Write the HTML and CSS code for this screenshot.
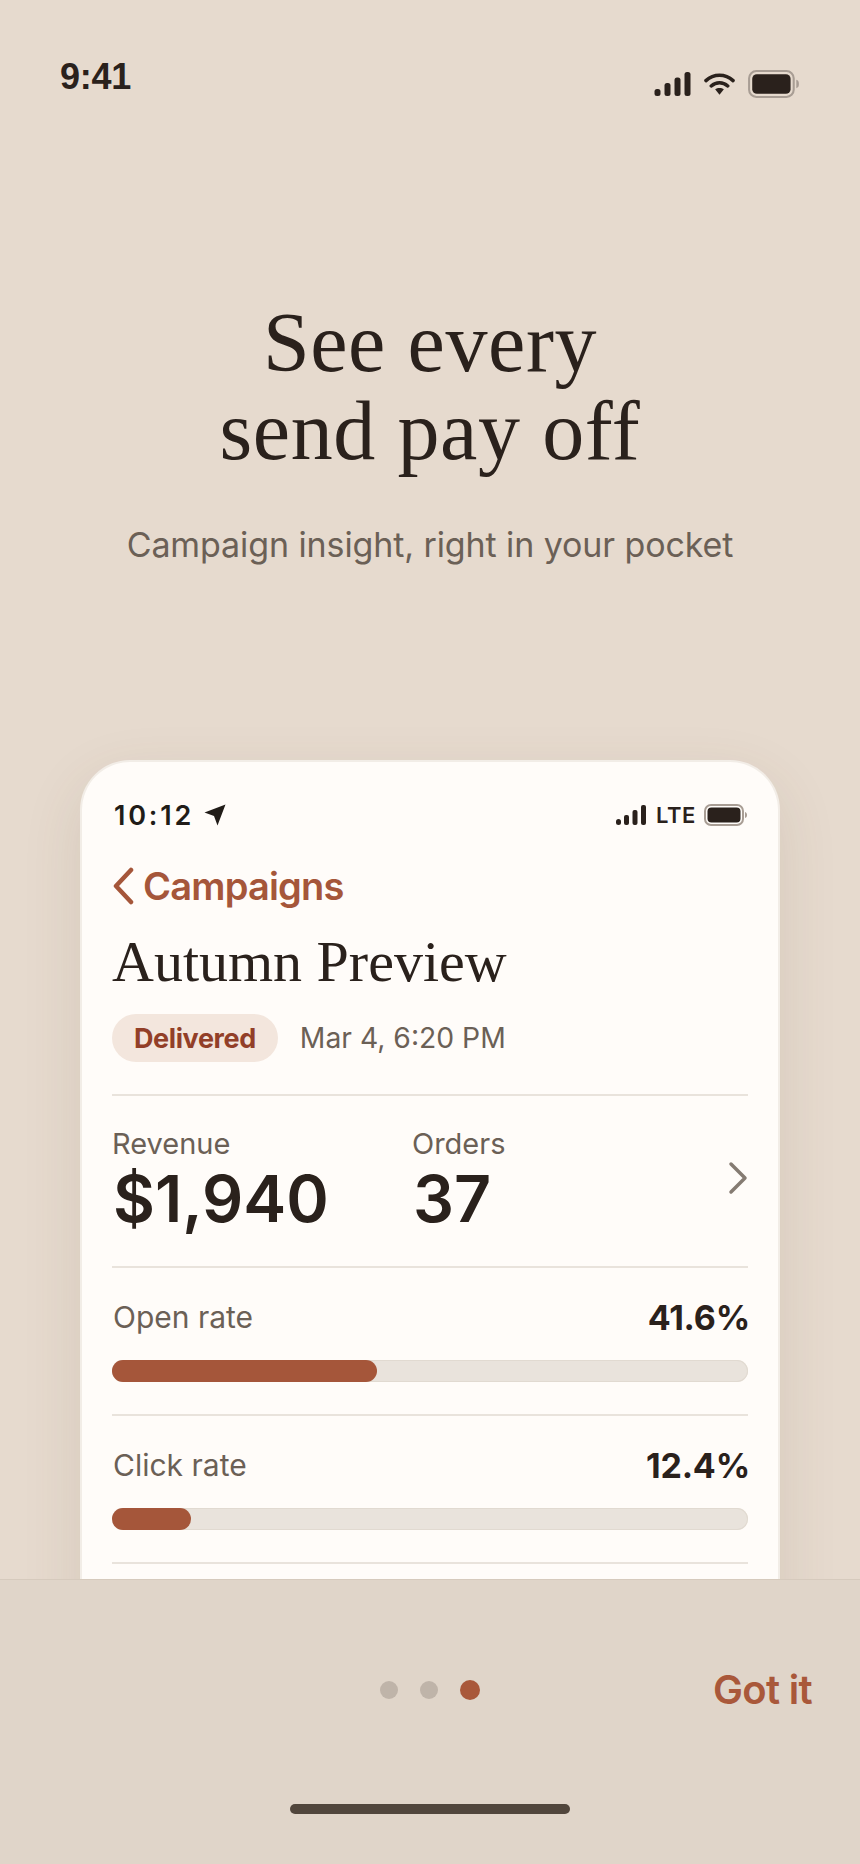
FILE: index.html
```html
<!DOCTYPE html>
<html lang="en">
<head>
<meta charset="utf-8">
<title>Campaign insight</title>
<link rel="stylesheet" href="styles.css">
</head>
<body>
<div class="screen">
  <main class="main">
    <div class="status">
      <span class="status-time">9:41</span>
      <div class="status-icons">
        <svg class="i-signal" viewBox="0 0 36 24"><rect x="0" y="17" width="6" height="7" rx="2.5"/><rect x="10" y="11" width="6" height="13" rx="2.5"/><rect x="20" y="5.500" width="6" height="18.500" rx="2.500"/><rect x="30" y="0" width="6" height="24" rx="2.500"/></svg>
        <svg class="i-wifi" viewBox="0 0 32 24"><path d="M2 8.500C10 1 22 1 30 8.500M7.500 14C12.500 9.500 19.500 9.500 24.500 14" fill="none" stroke-width="3.600" stroke-linecap="round"/><path d="M11.500 17.500c2.500-2 6.500-2 9 0L16 23z" stroke="none"/></svg>
        <svg class="i-batt" viewBox="0 0 50 27"><rect x="1" y="1" width="43" height="25" rx="7" class="b-rim"/><rect x="4" y="4" width="37" height="19" rx="4.500" class="b-fill"/><path d="M46.500 9.500c2 .5 2.500 2 2.500 4s-.5 3.500-2.500 4z" class="b-tip"/></svg>
      </div>
    </div>
    <section class="hero">
      <h1 class="title">See every<br>send pay off</h1>
      <p class="sub">Campaign insight, right in your pocket</p>
    </section>
    <article class="card">
      <div class="c-status">
        <div class="c-time"><span>10:12</span>
          <svg class="i-loc" viewBox="0 0 22 22"><path d="M21.500 .500 L13.500 21.500 L10 12 L.500 8.500Z"/></svg>
        </div>
        <div class="c-icons">
          <svg class="i-signal-s" viewBox="0 0 30 20"><rect x="0" y="14" width="5" height="6" rx="2.500"/><rect x="8" y="10" width="5" height="10" rx="2"/><rect x="16.500" y="5" width="5" height="15" rx="2"/><rect x="25" y="0" width="5" height="20" rx="2"/></svg>
          <span class="lte">LTE</span>
          <svg class="i-batt-s" viewBox="0 0 44 22"><rect x="1" y="1" width="38" height="20" rx="6" class="b-rim"/><rect x="3.500" y="3.500" width="33" height="15" rx="4" class="b-fill"/><path d="M41 8c1.500.5 2 1.500 2 3s-.5 2.500-2 3z" class="b-tip"/></svg>
        </div>
      </div>
      <div class="back">
        <svg class="i-back" viewBox="0 0 22 38"><path d="M19 3 L4 19 L19 35" fill="none" stroke-width="4.500" stroke-linecap="round" stroke-linejoin="round"/></svg>
        <span>Campaigns</span>
      </div>
      <h2 class="c-title">Autumn Preview</h2>
      <div class="meta">
        <span class="pill">Delivered</span>
        <span class="date">Mar 4, 6:20 PM</span>
      </div>
      <div class="stats">
        <div class="stat stat-rev">
          <div class="stat-label">Revenue</div>
          <div class="stat-value">$1,940</div>
        </div>
        <div class="stat">
          <div class="stat-label">Orders</div>
          <div class="stat-value">37</div>
        </div>
        <svg class="i-next" viewBox="0 0 20 34"><path d="M3 3 L17 17 L3 31" fill="none" stroke-width="3.500" stroke-linecap="round" stroke-linejoin="round"/></svg>
      </div>
      <div class="metric">
        <div class="metric-row"><span class="metric-name">Open rate</span><span class="metric-val">41.6%</span></div>
        <div class="track"><div class="fill" style="width:41.600%"></div></div>
      </div>
      <div class="metric">
        <div class="metric-row"><span class="metric-name">Click rate</span><span class="metric-val">12.4%</span></div>
        <div class="track"><div class="fill" style="width:12.400%"></div></div>
      </div>
    </article>
  </main>
  <footer class="footer">
    <div class="foot-row">
      <span></span>
      <div class="dots"><span class="dot"></span><span class="dot"></span><span class="dot on"></span></div>
      <span class="got">Got it</span>
    </div>
    <div class="home"></div>
  </footer>
</div>
</body>
</html>
```
FILE: styles.css
```css
* { box-sizing: border-box; }
html, body { margin: 0; padding: 0; }
body { background: #e6dace; font-family: Inter, "Liberation Sans", sans-serif; color: #2a211c; }
.screen { width: 860px; height: 1864px; display: flex; flex-direction: column; overflow: hidden; background: #e6dace; }
.main { flex: 1 1 0; min-height: 0; overflow: hidden; padding: 0 80px; }
.status { margin: 0 -80px; padding: 57px 60px 0 60px; height: 118px; display: flex; justify-content: space-between; align-items: flex-start; }
.status-time { font-family: "Liberation Sans", sans-serif; font-weight: 700; font-size: 36px; line-height: 39px; letter-spacing: -.3px; color: #2a211c; }
.status-icons { display: flex; align-items: center; gap: 13px; margin: 13px 0 0 0; }
.status-icons svg { fill: #2a211c; stroke: #2a211c; }
.i-signal { width: 37px; height: 24px; stroke: none !important; }
.i-wifi { width: 31px; height: 24px; }
.i-batt { width: 52px; height: 28px; stroke: none !important; }
.b-rim { fill: none; stroke: #a89d94; stroke-width: 2; }
.b-fill { fill: #2a211c; }
.b-tip { fill: #a89d94; stroke: none; }
.hero { text-align: center; margin: 0 -80px; padding-top: 181px; }
.title { margin: 0; font-family: "Liberation Serif", serif; font-weight: 400; font-size: 84px; line-height: 88px; letter-spacing: .6px; color: #2a211c; }
.sub { margin: 47px 0 0; font-size: 34px; line-height: 46px; letter-spacing: -.1px; color: #6b6056; }
.card { margin-top: 192px; height: 900px; background: #fffcf9; border: 2px solid #f2ede7; border-bottom: 0; border-radius: 50px 50px 0 0; padding: 36px 30px 0; box-shadow: 0 20px 60px rgba(90, 70, 50, .12); }
.c-status { display: flex; justify-content: space-between; align-items: center; height: 34px; }
.c-time { display: flex; align-items: center; gap: 10px; margin-left: 2px; font-weight: 600; font-size: 27px; letter-spacing: 2.800px; color: #211c18; }
.i-loc { width: 22px; height: 22px; fill: #211c18; }
.c-icons { display: flex; align-items: center; gap: 9px; }
.i-signal-s { width: 30px; height: 20px; margin-right: 1px; fill: #2a211c; }
.lte { font-weight: 600; font-size: 22px; letter-spacing: .6px; color: #2a211c; }
.i-batt-s { width: 44px; height: 22px; margin-left: -1px; }
.back { display: flex; align-items: center; gap: 9px; margin-top: 30px; height: 48px; color: #a5563a; font-weight: 600; font-size: 38px; letter-spacing: -.8px; }
.i-back { width: 22px; height: 38px; stroke: #a5563a; }
.c-title { margin: 19px 0 0; font-family: "Liberation Serif", serif; font-weight: 400; font-size: 58px; line-height: 66px; color: #2a211c; }
.meta { display: flex; align-items: center; gap: 22px; margin-top: 19px; }
.pill { background: #f3e6dd; border-radius: 24px; padding: 0 22px; height: 48px; display: flex; align-items: center; font-weight: 700; font-size: 27px; letter-spacing: -.4px; color: #923f28; }
.date { font-size: 28.300px; color: #6b6056; }
.stats { display: flex; align-items: flex-start; margin-top: 32px; border-top: 2px solid #e9e3dc; border-bottom: 2px solid #e9e3dc; height: 174px; padding-top: 31px; }
.stat-rev { width: 300px; }
.stat-label { font-size: 29px; line-height: 34px; margin-bottom: 3px; color: #6b6056; }
.stat-value { margin-left: 1px; font-weight: 600; font-size: 64.500px; line-height: 70px; color: #2a211c; }
.i-next { width: 20px; height: 34px; stroke: #857b72; margin: 34px 0 0 auto; }
.metric { border-bottom: 2px solid #e9e3dc; height: 148px; padding-top: 31px; }
.metric-row { display: flex; justify-content: space-between; align-items: center; height: 36px; }
.metric-name { margin-left: 1px; font-size: 30px; color: #6b6056; }
.metric-val { margin-right: -2px; font-weight: 700; font-size: 34px; letter-spacing: -.2px; color: #2a211c; }
.track { margin-top: 25px; height: 22px; border-radius: 11px; background: #e9e3dc; box-shadow: inset 0 0 0 1px #e1dad1; }
.fill { height: 100%; border-radius: 11px; background: #a5563a; }
.footer { height: 285px; background: #e0d5c9; border-top: 1px solid #d6cabd; position: relative; z-index: 1; }
.foot-row { height: 220px; padding-right: 48px; display: grid; grid-template-columns: 1fr auto 1fr; align-items: center; }
.dots { display: flex; gap: 22px; align-items: center; margin-left: 48px; }
.dot { width: 18px; height: 18px; border-radius: 50%; background: #bfb4a9; }
.dot.on { width: 20px; height: 20px; background: #a9583a; }
.got { justify-self: end; font-weight: 600; font-size: 40px; line-height: 46px; letter-spacing: -.7px; color: #a9583a; }
.home { width: 280px; height: 10px; border-radius: 5px; background: #51463c; margin: 4px auto 0; }
```
